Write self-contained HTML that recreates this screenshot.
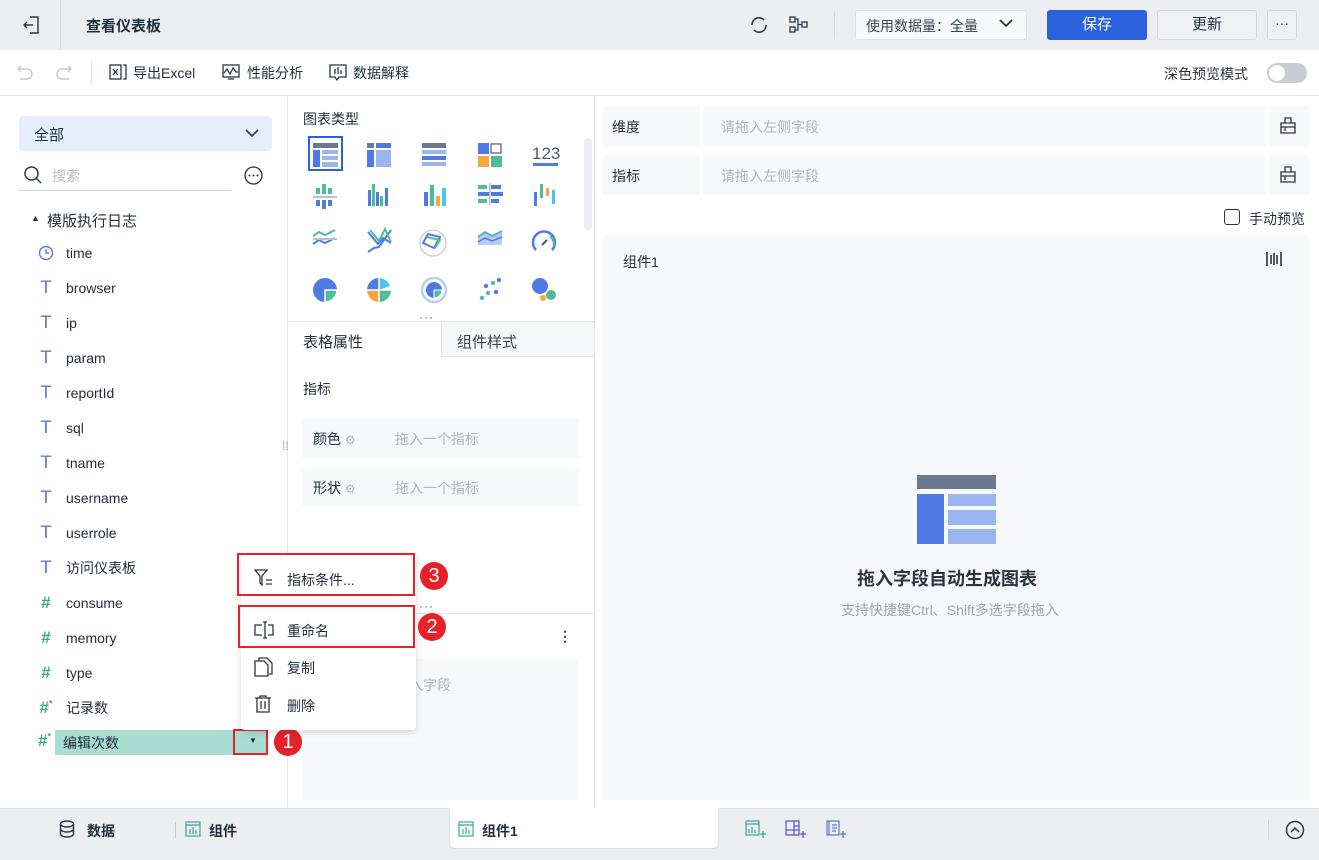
<!DOCTYPE html>
<html><head><meta charset="utf-8"><style>
*{box-sizing:border-box;margin:0;padding:0}
body{width:1319px;height:860px;position:relative;overflow:hidden;background:#fff;font-family:"Liberation Sans","Noto Sans CJK SC",sans-serif;color:#1f2d3d;font-size:14px}
.a{position:absolute}
.t{white-space:nowrap}
svg{display:block}
.row{position:absolute;left:38px;height:20px;font-size:14px;color:#1f2d3d;display:flex;align-items:center}
.row .ic{width:16px;margin-right:12px;font-size:16px;text-align:center}
.T{color:#5a7bd1;font-family:"DejaVu Sans",sans-serif;font-size:17px!important}
.H{color:#3aa894;font-weight:bold;font-size:17px!important}
.badge{position:absolute;width:28px;height:28px;border-radius:50%;background:#e6212a;color:#fff;font-size:20px;text-align:center;line-height:28px}
.redbox{position:absolute;border:2px solid #e6212a}
</style></head><body>
<!-- header -->
<div class="a" style="left:0;top:0;width:1319px;height:50px;background:#eceef2"></div>
<div class="a" style="left:60px;top:0;width:1px;height:50px;background:#d8dbe0"></div>
<svg class="a" style="left:22px;top:14px" width="20" height="22" viewBox="0 0 20 22"><path d="M8 3h8v16H8M2 11h9M5 8l-3 3 3 3" fill="none" stroke="#2b3441" stroke-width="1.4"/></svg>
<div class="a t" style="left:86px;top:15px;font-size:15px;font-weight:bold">查看仪表板</div>
<svg class="a" style="left:749px;top:15px" width="20" height="20" viewBox="0 0 20 20"><path d="M4 6a7 7 0 0 1 11-1M16 14a7 7 0 0 1-11 1M3 10a7 7 0 0 1 1-4M17 10a7 7 0 0 1-1 4" fill="none" stroke="#2b3441" stroke-width="1.6"/></svg>
<svg class="a" style="left:788px;top:15px" width="22" height="20" viewBox="0 0 22 20"><rect x="2" y="2" width="5" height="5" fill="none" stroke="#2b3441" stroke-width="1.3"/><rect x="2" y="12" width="5" height="5" fill="none" stroke="#2b3441" stroke-width="1.3"/><rect x="14" y="7" width="5" height="5" fill="none" stroke="#2b3441" stroke-width="1.3"/><path d="M7 4h3v11H7M10 9.5h4" fill="none" stroke="#2b3441" stroke-width="1.3"/></svg>
<div class="a" style="left:834px;top:11px;width:1px;height:28px;background:#d8dbe0"></div>
<div class="a" style="left:855px;top:10px;width:172px;height:30px;background:#f8f9fb;border:1px solid #dde0e5;border-radius:3px"></div>
<div class="a t" style="left:866px;top:16px;color:#3a4552">使用数据量：全量</div>
<svg class="a" style="left:998px;top:17px" width="16" height="12" viewBox="0 0 16 12"><path d="M2 3l6 6 6-6" fill="none" stroke="#2b3441" stroke-width="1.8"/></svg>
<div class="a" style="left:1047px;top:10px;width:100px;height:30px;background:#2a62de;border-radius:3px;color:#fff;text-align:center;line-height:30px;font-size:15px">保存</div>
<div class="a" style="left:1157px;top:10px;width:100px;height:30px;background:#f0f1f4;border:1px solid #d3d6dc;border-radius:3px;text-align:center;line-height:28px;font-size:15px">更新</div>
<div class="a" style="left:1267px;top:10px;width:30px;height:30px;background:#f0f1f4;border:1px solid #d3d6dc;border-radius:3px;text-align:center;line-height:24px;font-size:14px">···</div>
<!-- toolbar -->
<div class="a" style="left:0;top:95px;width:1319px;height:1px;background:#e3e5ea"></div>
<svg class="a" style="left:16px;top:64px" width="18" height="16" viewBox="0 0 18 16"><path d="M5 2L2 5l3 3M2 5h9a5 5 0 0 1 0 10H4" fill="none" stroke="#c5c9d0" stroke-width="1.5"/></svg>
<svg class="a" style="left:55px;top:64px" width="18" height="16" viewBox="0 0 18 16"><path d="M13 2l3 3-3 3M16 5H7a5 5 0 0 0 0 10h7" fill="none" stroke="#c5c9d0" stroke-width="1.5"/></svg>
<div class="a" style="left:91px;top:60px;width:1px;height:26px;background:#e3e5ea"></div>
<svg class="a" style="left:109px;top:64px" width="18" height="16" viewBox="0 0 18 16"><rect x="1" y="1" width="11" height="14" fill="none" stroke="#2b3441" stroke-width="1.3"/><path d="M4 5l5 6M9 5l-5 6M14 1h3v14h-3" fill="none" stroke="#2b3441" stroke-width="1.3"/></svg>
<div class="a t" style="left:133px;top:63px">导出Excel</div>
<svg class="a" style="left:222px;top:64px" width="18" height="16" viewBox="0 0 18 16"><rect x="1" y="1" width="16" height="12" fill="none" stroke="#2b3441" stroke-width="1.3"/><path d="M2 9l3-4 3 5 3-6 3 4h2M6 15h6" fill="none" stroke="#2b3441" stroke-width="1.3"/></svg>
<div class="a t" style="left:247px;top:63px">性能分析</div>
<svg class="a" style="left:329px;top:64px" width="18" height="17" viewBox="0 0 18 17"><path d="M1 1h16v12H10l-2 3-2-3H1z" fill="none" stroke="#2b3441" stroke-width="1.3"/><path d="M6 5v5M9 3v7M12 6v4" stroke="#2b3441" stroke-width="1.3"/></svg>
<div class="a t" style="left:353px;top:63px">数据解释</div>
<div class="a t" style="left:1164px;top:64px;color:#2b3441">深色预览模式</div>
<div class="a" style="left:1267px;top:63px;width:40px;height:20px;border-radius:10px;background:#c9ccd2"></div>
<div class="a" style="left:1269px;top:65px;width:16px;height:16px;border-radius:50%;background:#fff"></div>
<!-- left panel -->
<div class="a" style="left:287px;top:96px;width:1px;height:712px;background:#e3e5ea"></div>
<div class="a" style="left:19px;top:116px;width:253px;height:35px;background:#e5eefc;border-radius:4px"></div>
<div class="a t" style="left:34px;top:124px;font-size:15px">全部</div>
<svg class="a" style="left:244px;top:127px" width="16" height="12" viewBox="0 0 16 12"><path d="M2 3l6 6 6-6" fill="none" stroke="#2b3441" stroke-width="1.6"/></svg>
<svg class="a" style="left:23px;top:165px" width="20" height="20" viewBox="0 0 20 20"><circle cx="8.5" cy="8.5" r="6.5" fill="none" stroke="#2b3441" stroke-width="1.5"/><path d="M13 13l5 5" stroke="#2b3441" stroke-width="1.5"/></svg>
<div class="a t" style="left:52px;top:166px;color:#b8bdc6">搜索</div>
<div class="a" style="left:18px;top:190px;width:213px;height:1px;background:#d4d7dc"></div>
<svg class="a" style="left:244px;top:166px" width="19" height="19" viewBox="0 0 19 19"><circle cx="9.5" cy="9.5" r="8.5" fill="none" stroke="#2b3441" stroke-width="1.3"/><circle cx="5.5" cy="9.5" r="1" fill="#2b3441"/><circle cx="9.5" cy="9.5" r="1" fill="#2b3441"/><circle cx="13.5" cy="9.5" r="1" fill="#2b3441"/></svg>
<div class="a t" style="left:31px;top:213px;font-size:9px;color:#2b3441">▲</div>
<div class="a t" style="left:47px;top:210px;font-size:15px">模版执行日志</div>
<div class="row" style="top:243px"><svg width="16" height="16" viewBox="0 0 16 16" style="margin-right:12px"><circle cx="8" cy="8" r="6.5" fill="none" stroke="#5a7bd1" stroke-width="1.4"/><path d="M8 4v4h3" fill="none" stroke="#5a7bd1" stroke-width="1.4"/></svg>time</div>
<div class="row" style="top:278px"><span class="ic T">T</span>browser</div>
<div class="row" style="top:313px"><span class="ic T">T</span>ip</div>
<div class="row" style="top:348px"><span class="ic T">T</span>param</div>
<div class="row" style="top:383px"><span class="ic T">T</span>reportId</div>
<div class="row" style="top:418px"><span class="ic T">T</span>sql</div>
<div class="row" style="top:453px"><span class="ic T">T</span>tname</div>
<div class="row" style="top:488px"><span class="ic T">T</span>username</div>
<div class="row" style="top:523px"><span class="ic T">T</span>userrole</div>
<div class="row" style="top:558px"><span class="ic T">T</span>访问仪表板</div>
<div class="row" style="top:593px"><span class="ic H">#</span>consume</div>
<div class="row" style="top:628px"><span class="ic H">#</span>memory</div>
<div class="row" style="top:663px"><span class="ic H">#</span>type</div>
<div class="row" style="top:698px"><span class="ic H">#<sup style="font-size:9px">*</sup></span>记录数</div>
<div class="a" style="left:55px;top:730px;width:212px;height:25px;background:#a9ddd4"></div>
<div class="a t H" style="left:38px;top:731px">#<sup style="font-size:9px">*</sup></div>
<div class="a t" style="left:63px;top:733px">编辑次数</div>
<div class="redbox" style="left:233px;top:729px;width:35px;height:26px"></div>
<div class="a t" style="left:249px;top:736px;font-size:8px">▼</div>
<div class="badge" style="left:274px;top:728px">1</div>
<div class="a t" style="left:282px;top:442px;color:#8a9099;font-size:12px;line-height:8px">⁞⁞</div>
<!-- middle -->
<div class="a" style="left:594px;top:96px;width:1px;height:712px;background:#e3e5ea"></div>
<div class="a t" style="left:303px;top:109px;font-size:14px">图表类型</div>
<div class="a" style="left:584px;top:138px;width:8px;height:92px;border-radius:4px;background:#eceef1"></div>
<div class="a" style="left:308px;top:136px;width:35px;height:35px;border:2px solid #2a62de"></div>
<svg class="a" style="left:310px;top:140px" width="250" height="170" viewBox="0 0 250 170">
<rect x="3" y="3" width="25" height="5" fill="#6b7a90"/><rect x="3" y="10" width="7" height="17" fill="#4f7ae6"/><rect x="12" y="10" width="16" height="4" fill="#9bb5f3"/><rect x="12" y="16" width="16" height="4" fill="#9bb5f3"/><rect x="12" y="22" width="16" height="5" fill="#9bb5f3"/>
<rect x="57" y="3" width="7" height="5" fill="#6b7a90"/><rect x="66" y="3" width="15" height="5" fill="#4f7ae6"/><rect x="57" y="10" width="7" height="17" fill="#4f7ae6"/><rect x="66" y="10" width="15" height="17" fill="#9bb5f3"/>
<rect x="112" y="3" width="24" height="5" fill="#6b7a90"/><rect x="112" y="10" width="24" height="4" fill="#9bb5f3"/><rect x="112" y="16" width="24" height="4" fill="#4f7ae6"/><rect x="112" y="22" width="24" height="4" fill="#9bb5f3"/>
<rect x="168" y="3" width="11" height="11" fill="#4f7ae6"/><rect x="181" y="4" width="10" height="9" fill="none" stroke="#6b7a90" stroke-width="1.5"/><rect x="168" y="16" width="11" height="11" fill="#f5a93a"/><rect x="181" y="16" width="11" height="11" fill="#4dbd9c"/>
<text x="222" y="19" font-family="Liberation Sans" font-size="17" fill="#4d5a6b">123</text><rect x="223" y="23" width="25" height="3" fill="#4f7ae6"/>
<rect x="6" y="48" width="4" height="6" fill="#4dbd9c"/><rect x="12" y="44" width="4" height="10" fill="#4dbd9c"/><rect x="18" y="48" width="4" height="6" fill="#4dbd9c"/><rect x="3" y="56" width="24" height="2" fill="#b8c0cc"/><rect x="6" y="60" width="4" height="6" fill="#4f7ae6"/><rect x="12" y="60" width="4" height="9" fill="#4f7ae6"/><rect x="18" y="60" width="4" height="6" fill="#4f7ae6"/>
<rect x="58" y="50" width="3" height="16" fill="#4f7ae6"/><rect x="62" y="44" width="3" height="22" fill="#4dbd9c"/><rect x="66" y="52" width="3" height="14" fill="#4f7ae6"/><rect x="70" y="56" width="3" height="10" fill="#4dbd9c"/><rect x="75" y="48" width="3" height="18" fill="#4f7ae6"/>
<rect x="114" y="52" width="4" height="14" fill="#4f7ae6"/><rect x="120" y="45" width="4" height="21" fill="#4dbd9c"/><rect x="126" y="56" width="4" height="10" fill="#f5a93a"/><rect x="132" y="48" width="4" height="18" fill="#4fc3f0"/>
<rect x="168" y="45" width="9" height="4" fill="#4dbd9c"/><rect x="181" y="45" width="10" height="4" fill="#4f7ae6"/><rect x="168" y="52" width="11" height="4" fill="#4f7ae6"/><rect x="181" y="52" width="12" height="4" fill="#4f7ae6"/><rect x="168" y="59" width="9" height="4" fill="#4dbd9c"/><rect x="181" y="59" width="8" height="4" fill="#4f7ae6"/><rect x="179" y="43" width="1.5" height="22" fill="#b8c0cc"/>
<rect x="224" y="52" width="3" height="14" fill="#4f7ae6"/><rect x="230" y="44" width="3" height="14" fill="#4dbd9c"/><rect x="236" y="48" width="3" height="8" fill="#f5a93a"/><rect x="242" y="50" width="3" height="14" fill="#4fc3f0"/>
<path d="M3 96l6-4 6 3 10-5" fill="none" stroke="#4dbd9c" stroke-width="2"/><path d="M3 104l6-4 6 3 10-5" fill="none" stroke="#4f7ae6" stroke-width="2"/><rect x="3" y="98" width="24" height="2" fill="#b8c0cc"/>
<path d="M58 112l6-4 5-1 12-17M58 92l10 12 5-6 8 5" fill="none" stroke="#4f7ae6" stroke-width="2"/><path d="M60 90l9 11 6-12 6 13" fill="none" stroke="#4dbd9c" stroke-width="2"/>
<circle cx="123" cy="103" r="13" fill="none" stroke="#c5ccd8" stroke-width="1.3"/><path d="M113 103l5-9 12 3-6 11z" fill="none" stroke="#4f7ae6" stroke-width="2"/><path d="M117 97l13 3-5 8" fill="none" stroke="#4dbd9c" stroke-width="2"/>
<path d="M168 97l7-5 7 4 10-5v14h-24z" fill="#b6ccf5"/><path d="M168 97l7-5 7 4 10-5" fill="none" stroke="#4dbd9c" stroke-width="2"/><path d="M168 102l7-4 7 3 10-4" fill="none" stroke="#4f7ae6" stroke-width="1.5"/>
<path d="M226 110a11 11 0 1 1 16 0" fill="none" stroke="#4f7ae6" stroke-width="2.5"/><path d="M240 96a11 11 0 0 1 4 10" fill="none" stroke="#4dbd9c" stroke-width="2.5"/><path d="M232 105l5-5" stroke="#4d5a6b" stroke-width="2"/>
<circle cx="15" cy="150" r="12" fill="#4f7ae6"/><path d="M15 150h12a12 12 0 0 1-12 12z" fill="#4dbd9c" stroke="#fff" stroke-width="1.5"/>
<path d="M69 150v-12a12 12 0 0 0-12 12z" fill="#4f7ae6"/><path d="M69 150v-12a12 12 0 0 1 11 8z" fill="#4fc3f0"/><path d="M69 150h12a12 12 0 0 1-12 12z" fill="#4dbd9c"/><path d="M69 150v12a12 12 0 0 1-12-12z" fill="#f5a93a"/><path d="M69 137v26M56 150h26" stroke="#fff" stroke-width="1.5"/>
<circle cx="124" cy="150" r="12" fill="none" stroke="#b6ccf5" stroke-width="2.5"/><circle cx="124" cy="150" r="8" fill="#4f7ae6"/><path d="M124 150h8a8 8 0 0 1-8 8z" fill="#4dbd9c" stroke="#fff" stroke-width="1"/>
<circle cx="172" cy="158" r="2.2" fill="#4dbd9c"/><circle cx="178" cy="153" r="2.2" fill="#4dbd9c"/><circle cx="186" cy="152" r="2.2" fill="#4f7ae6"/><circle cx="176" cy="146" r="2.2" fill="#4f7ae6"/><circle cx="183" cy="143" r="2.2" fill="#4dbd9c"/><circle cx="189" cy="140" r="2.2" fill="#4f7ae6"/>
<circle cx="230" cy="146" r="8" fill="#4f7ae6"/><circle cx="241" cy="155" r="5" fill="#4dbd9c"/><circle cx="233" cy="158" r="3" fill="#f5a93a"/>
</svg>
<div class="a t" style="left:419px;top:310px;font-size:12px;letter-spacing:1px;color:#555">···</div>
<div class="a" style="left:288px;top:321px;width:306px;height:1px;background:#e3e5ea"></div>
<div class="a" style="left:441px;top:322px;width:153px;height:35px;background:#f5f6f8;border-left:1px solid #e3e5ea;border-bottom:1px solid #e3e5ea"></div>
<div class="a t" style="left:303px;top:331px;font-size:15px">表格属性</div>
<div class="a t" style="left:457px;top:331px;font-size:15px;color:#3a4552">组件样式</div>
<div class="a t" style="left:303px;top:379px">指标</div>
<div class="a" style="left:302px;top:418px;width:277px;height:40px;background:#f7f8fb"></div>
<div class="a t" style="left:313px;top:429px">颜色 <span style="color:#b0b5bd;font-size:12px">⚙</span></div>
<div class="a t" style="left:395px;top:429px;color:#b0b5bd">拖入一个指标</div>
<div class="a" style="left:302px;top:468px;width:277px;height:38px;background:#f7f8fb"></div>
<div class="a t" style="left:313px;top:478px">形状 <span style="color:#b0b5bd;font-size:12px">⚙</span></div>
<div class="a t" style="left:395px;top:478px;color:#b0b5bd">拖入一个指标</div>
<div class="a" style="left:288px;top:613px;width:306px;height:1px;background:#e3e5ea"></div>
<div class="a t" style="left:419px;top:599px;font-size:12px;letter-spacing:1px;color:#555">···</div>
<div class="a t" style="left:558px;top:628px;font-weight:bold;color:#444">⋮</div>
<div class="a" style="left:302px;top:659px;width:277px;height:141px;background:#f7f8fb"></div>
<div class="a t" style="left:395px;top:675px;color:#b0b5bd">拖入字段</div>
<!-- context menu -->
<div class="a" style="left:241px;top:555px;width:175px;height:175px;background:#fff;border-radius:4px;box-shadow:0 2px 8px rgba(0,0,0,.15)"></div>
<div class="redbox" style="left:237px;top:553px;width:178px;height:43px"></div>
<div class="redbox" style="left:238px;top:605px;width:177px;height:43px"></div>
<svg class="a" style="left:254px;top:569px" width="20" height="18" viewBox="0 0 20 18"><path d="M1 1h12l-5 6v9l-2-2V7z" fill="none" stroke="#2b3441" stroke-width="1.3"/><path d="M12 11h6M12 15h6" stroke="#2b3441" stroke-width="1.3"/></svg>
<div class="a t" style="left:287px;top:570px">指标条件...</div>
<svg class="a" style="left:254px;top:620px" width="20" height="20" viewBox="0 0 20 20"><path d="M8 5H1v10h7M14 5h5v10h-5M9 2h4M9 18h4M11 2v16" fill="none" stroke="#2b3441" stroke-width="1.3"/></svg>
<div class="a t" style="left:287px;top:621px">重命名</div>
<svg class="a" style="left:254px;top:657px" width="20" height="20" viewBox="0 0 20 20"><path d="M5 4V1h8l5 5v11h-3M1 4h9l4 4v11H1z" fill="none" stroke="#2b3441" stroke-width="1.3"/></svg>
<div class="a t" style="left:287px;top:658px">复制</div>
<svg class="a" style="left:254px;top:695px" width="18" height="18" viewBox="0 0 18 18"><path d="M1 3h16M6 3V1h6v2M3 3v14h12V3M7 6v8M11 6v8" fill="none" stroke="#2b3441" stroke-width="1.3"/></svg>
<div class="a t" style="left:287px;top:696px">删除</div>
<div class="badge" style="left:420px;top:562px">3</div>
<div class="badge" style="left:418px;top:613px">2</div>
<!-- right panel -->
<div class="a" style="left:603px;top:106px;width:97px;height:40px;background:#f7f8fb"></div>
<div class="a" style="left:703px;top:106px;width:563px;height:40px;background:#f7f8fb"></div>
<div class="a" style="left:1269px;top:106px;width:40px;height:40px;background:#f7f8fb"></div>
<div class="a t" style="left:612px;top:117px">维度</div>
<div class="a t" style="left:721px;top:117px;color:#b0b5bd">请拖入左侧字段</div>
<div class="a" style="left:603px;top:155px;width:97px;height:40px;background:#f7f8fb"></div>
<div class="a" style="left:703px;top:155px;width:563px;height:40px;background:#f7f8fb"></div>
<div class="a" style="left:1269px;top:155px;width:40px;height:40px;background:#f7f8fb"></div>
<div class="a t" style="left:612px;top:166px">指标</div>
<div class="a t" style="left:721px;top:166px;color:#b0b5bd">请拖入左侧字段</div>
<svg class="a" style="left:1279px;top:117px" width="18" height="18" viewBox="0 0 18 18"><path d="M6 1h6v5h4v10H2V6h4zM6 6h6M2 10h14M6 10v4" fill="none" stroke="#2b3441" stroke-width="1.3"/></svg>
<svg class="a" style="left:1279px;top:166px" width="18" height="18" viewBox="0 0 18 18"><path d="M6 1h6v5h4v10H2V6h4zM6 6h6M2 10h14M6 10v4" fill="none" stroke="#2b3441" stroke-width="1.3"/></svg>
<div class="a" style="left:1224px;top:209px;width:16px;height:16px;border:1.5px solid #2b3441;border-radius:3px"></div>
<div class="a t" style="left:1249px;top:209px">手动预览</div>
<div class="a" style="left:603px;top:235px;width:706px;height:565px;background:#f7f8fb"></div>
<div class="a t" style="left:623px;top:252px">组件1</div>
<svg class="a" style="left:1265px;top:250px" width="18" height="18" viewBox="0 0 18 18"><path d="M2 2v14M16 2v14M6 5v9M9 3v12M12 5v9" stroke="#2b3441" stroke-width="1.6"/></svg>
<svg class="a" style="left:917px;top:475px" width="79" height="69" viewBox="0 0 79 69"><rect width="79" height="14" fill="#6b7a90"/><rect y="19" width="27" height="50" fill="#4f7ae6"/><rect x="31" y="19" width="48" height="12" fill="#9bb5f3"/><rect x="31" y="35" width="48" height="15" fill="#9bb5f3"/><rect x="31" y="54" width="48" height="15" fill="#9bb5f3"/></svg>
<div class="a t" style="left:857px;top:565px;font-size:18px;font-weight:bold;color:#2b3441">拖入字段自动生成图表</div>
<div class="a t" style="left:841px;top:600px;color:#a0a6ae;font-size:14px">支持快捷键Ctrl、Shift多选字段拖入</div>
<!-- bottom -->
<div class="a" style="left:0;top:808px;width:1319px;height:52px;background:#eceef2;border-top:1px solid #dde0e5"></div>
<div class="a" style="left:449px;top:808px;width:270px;height:41px;background:#fff;border-radius:0 0 6px 6px;border:1px solid #dde0e5;border-top:none"></div>
<svg class="a" style="left:59px;top:820px" width="16" height="18" viewBox="0 0 16 18"><ellipse cx="8" cy="4" rx="6.5" ry="3" fill="none" stroke="#2b3441" stroke-width="1.4"/><path d="M1.5 4v10c0 1.7 3 3 6.5 3s6.5-1.3 6.5-3V4M1.5 9c0 1.7 3 3 6.5 3s6.5-1.3 6.5-3" fill="none" stroke="#2b3441" stroke-width="1.4"/></svg>
<div class="a t" style="left:87px;top:821px;font-weight:bold">数据</div>
<div class="a" style="left:175px;top:822px;width:1px;height:16px;background:#c5c9d0"></div>
<svg class="a" style="left:185px;top:821px" width="16" height="16" viewBox="0 0 16 16"><rect x="1" y="1" width="14" height="14" fill="none" stroke="#3aa894" stroke-width="1.2"/><path d="M1 4h14M5 13V8M8 13V6M11 13V9" stroke="#3aa894" stroke-width="1.2"/></svg>
<div class="a t" style="left:209px;top:821px;font-weight:bold">组件</div>
<svg class="a" style="left:458px;top:821px" width="16" height="16" viewBox="0 0 16 16"><rect x="1" y="1" width="14" height="14" fill="none" stroke="#3aa894" stroke-width="1.2"/><path d="M1 4h14M5 13V8M8 13V6M11 13V9" stroke="#3aa894" stroke-width="1.2"/></svg>
<div class="a t" style="left:482px;top:821px;font-weight:bold">组件1</div>
<svg class="a" style="left:745px;top:820px" width="22" height="20" viewBox="0 0 22 20"><rect x="1" y="1" width="13" height="14" fill="none" stroke="#3aa894" stroke-width="1.2"/><path d="M1 4h13M4 13V9M7 13V7M10 13V10M15 14h6M18 11v7" stroke="#3aa894" stroke-width="1.3"/></svg>
<svg class="a" style="left:785px;top:820px" width="22" height="20" viewBox="0 0 22 20"><path d="M1 1h13v14H1zM9 1v14M1 10h13M9 6h5" fill="none" stroke="#5a55c9" stroke-width="1.2"/><path d="M15 14h6M18 11v7" stroke="#5a55c9" stroke-width="1.3"/></svg>
<svg class="a" style="left:826px;top:820px" width="22" height="20" viewBox="0 0 22 20"><path d="M1 1h12v14H1zM3 1v14M6 5h5M6 8h5M6 11h4" fill="none" stroke="#5a7bd1" stroke-width="1.2"/><path d="M14 14h6M17 11v7" stroke="#5a7bd1" stroke-width="1.3"/></svg>
<div class="a" style="left:1268px;top:820px;width:1px;height:20px;background:#d4d7dc"></div>
<svg class="a" style="left:1285px;top:820px" width="20" height="20" viewBox="0 0 20 20"><circle cx="10" cy="10" r="8.5" fill="none" stroke="#2b3441" stroke-width="1.4"/><path d="M6 12l4-4 4 4" fill="none" stroke="#2b3441" stroke-width="1.5"/></svg>
</body></html>
